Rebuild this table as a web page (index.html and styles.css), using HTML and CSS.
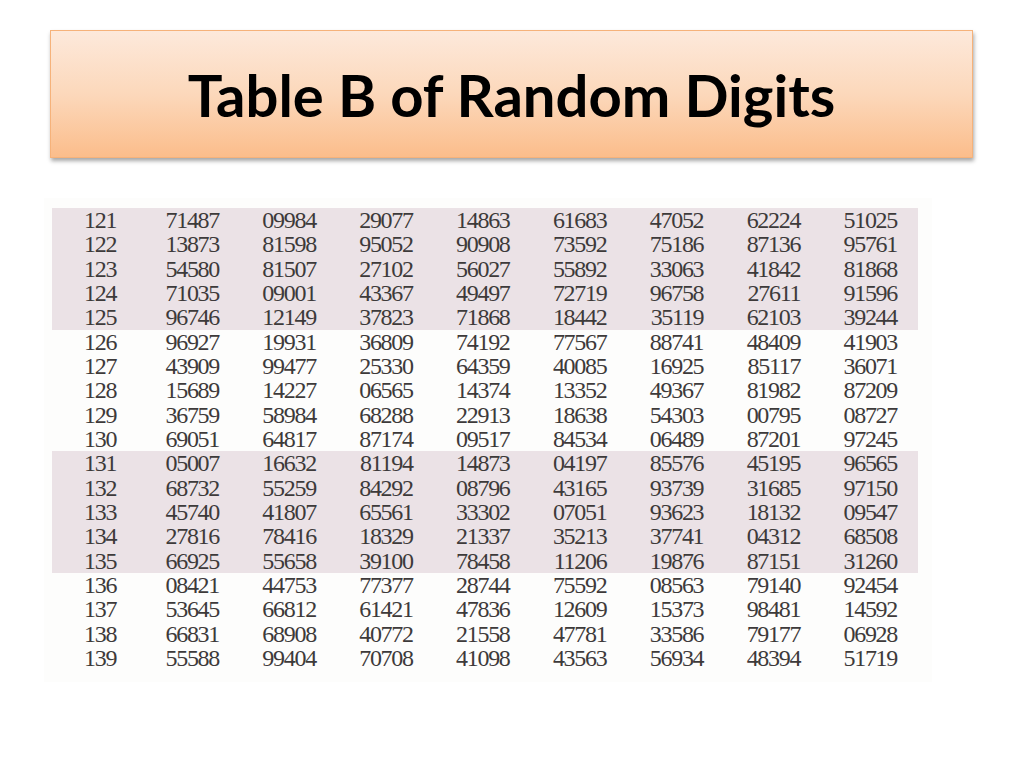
FILE: index.html
```html
<!DOCTYPE html>
<html>
<head>
<meta charset="utf-8">
<link rel="stylesheet" href="styles.css">
</head>
<body>
<div class="slide">
  <div class="title-box"><h1 class="title">Table B of Random Digits</h1></div>
  <div class="paper">
    <div class="digits" id="digits">
      <div class="row shade"><span>121</span><span>71487</span><span>09984</span><span>29077</span><span>14863</span><span>61683</span><span>47052</span><span>62224</span><span>51025</span></div>
      <div class="row shade"><span>122</span><span>13873</span><span>81598</span><span>95052</span><span>90908</span><span>73592</span><span>75186</span><span>87136</span><span>95761</span></div>
      <div class="row shade"><span>123</span><span>54580</span><span>81507</span><span>27102</span><span>56027</span><span>55892</span><span>33063</span><span>41842</span><span>81868</span></div>
      <div class="row shade"><span>124</span><span>71035</span><span>09001</span><span>43367</span><span>49497</span><span>72719</span><span>96758</span><span>27611</span><span>91596</span></div>
      <div class="row shade"><span>125</span><span>96746</span><span>12149</span><span>37823</span><span>71868</span><span>18442</span><span>35119</span><span>62103</span><span>39244</span></div>
      <div class="row"><span>126</span><span>96927</span><span>19931</span><span>36809</span><span>74192</span><span>77567</span><span>88741</span><span>48409</span><span>41903</span></div>
      <div class="row"><span>127</span><span>43909</span><span>99477</span><span>25330</span><span>64359</span><span>40085</span><span>16925</span><span>85117</span><span>36071</span></div>
      <div class="row"><span>128</span><span>15689</span><span>14227</span><span>06565</span><span>14374</span><span>13352</span><span>49367</span><span>81982</span><span>87209</span></div>
      <div class="row"><span>129</span><span>36759</span><span>58984</span><span>68288</span><span>22913</span><span>18638</span><span>54303</span><span>00795</span><span>08727</span></div>
      <div class="row"><span>130</span><span>69051</span><span>64817</span><span>87174</span><span>09517</span><span>84534</span><span>06489</span><span>87201</span><span>97245</span></div>
      <div class="row shade"><span>131</span><span>05007</span><span>16632</span><span>81194</span><span>14873</span><span>04197</span><span>85576</span><span>45195</span><span>96565</span></div>
      <div class="row shade"><span>132</span><span>68732</span><span>55259</span><span>84292</span><span>08796</span><span>43165</span><span>93739</span><span>31685</span><span>97150</span></div>
      <div class="row shade"><span>133</span><span>45740</span><span>41807</span><span>65561</span><span>33302</span><span>07051</span><span>93623</span><span>18132</span><span>09547</span></div>
      <div class="row shade"><span>134</span><span>27816</span><span>78416</span><span>18329</span><span>21337</span><span>35213</span><span>37741</span><span>04312</span><span>68508</span></div>
      <div class="row shade"><span>135</span><span>66925</span><span>55658</span><span>39100</span><span>78458</span><span>11206</span><span>19876</span><span>87151</span><span>31260</span></div>
      <div class="row"><span>136</span><span>08421</span><span>44753</span><span>77377</span><span>28744</span><span>75592</span><span>08563</span><span>79140</span><span>92454</span></div>
      <div class="row"><span>137</span><span>53645</span><span>66812</span><span>61421</span><span>47836</span><span>12609</span><span>15373</span><span>98481</span><span>14592</span></div>
      <div class="row"><span>138</span><span>66831</span><span>68908</span><span>40772</span><span>21558</span><span>47781</span><span>33586</span><span>79177</span><span>06928</span></div>
      <div class="row"><span>139</span><span>55588</span><span>99404</span><span>70708</span><span>41098</span><span>43563</span><span>56934</span><span>48394</span><span>51719</span></div>
    </div>
  </div>
</div>
</body>
</html>
```

FILE: styles.css
```css
html, body {
  margin: 0;
  padding: 0;
  background: #ffffff;
}
.slide {
  width: 1024px;
  height: 768px;
  overflow: hidden;
  padding-top: 30px;
  box-sizing: border-box;
}
.title-box {
  margin-left: 50px;
  width: 923px;
  height: 128px;
  box-sizing: border-box;
  border: 1px solid #f6b27a;
  background: linear-gradient(to bottom, #fde9db 0%, #fcd8bb 50%, #fbbd8b 100%);
  box-shadow: 1px 3px 4px rgba(0, 0, 0, 0.35);
  display: flex;
  align-items: center;
  justify-content: center;
}
.title {
  margin: 0;
  font-family: Lato, "Open Sans", sans-serif;
  font-weight: 700;
  font-size: 58px;
  letter-spacing: 0;
  color: #000000;
  line-height: 1;
  padding-top: 2px;
}
.paper {
  margin-top: 40px;
  margin-left: 44px;
  width: 880px;
  padding: 10px 0 12px 8px;
  background: #fdfdfc;
}
.digits {
  width: 866px;
}
.row {
  display: grid;
  grid-template-columns: 30px 105px repeat(7, 96.86px);
  padding-left: 32px;
  height: 24.33px;
  line-height: 24.33px;
  font-family: "Liberation Serif", "Times New Roman", serif;
  font-size: 24px;
  letter-spacing: -1.3px;
  color: #3d3a3a;
}
.row span {
  text-align: right;
  white-space: nowrap;
}
.row span:first-child {
  text-align: left;
}
.shade {
  background: #ebe2e6;
}
```
